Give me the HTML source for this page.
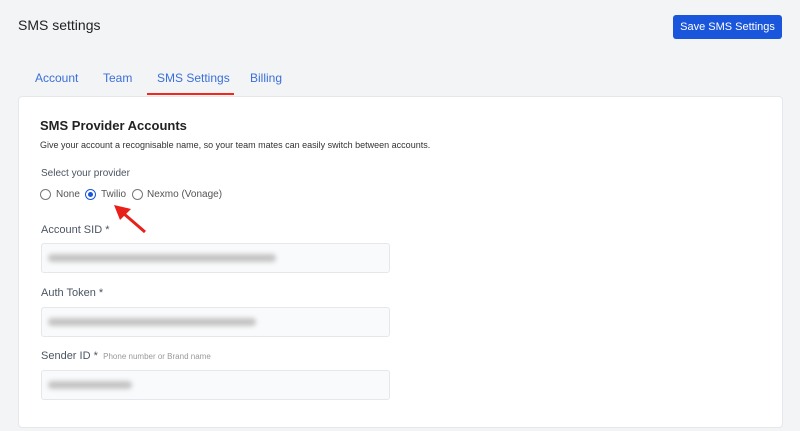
<!DOCTYPE html>
<html><head><style>
body{margin:0;width:800px;height:431px;background:#f3f4f6;font-family:"Liberation Sans",sans-serif;position:relative;overflow:hidden}
.a{position:absolute;white-space:nowrap}
.card{position:absolute;left:18px;top:96px;width:763px;height:330px;background:#fff;border:1px solid #e5e7eb;border-radius:4px}
.inp{position:absolute;left:41px;width:347px;height:28px;background:#f9fafb;border:1px solid #e5e7eb;border-radius:3px}
.blur{position:absolute;top:10px;left:6px;height:8px;background:#c4c4c4;filter:blur(2.5px);border-radius:4px}
.lbl{font-size:11px;color:#4b5563}
.radio{position:absolute;width:9px;height:9px;border:1px solid #777;border-radius:50%}
</style></head><body>
<div class="a" style="left:18px;top:17px;font-size:14px;color:#222">SMS settings</div>
<div class="a" style="left:673px;top:15px;width:109px;height:24px;background:#1a56db;border-radius:3px;color:#fff;font-size:11px;line-height:24px;text-align:center">Save SMS Settings</div>
<div class="a" style="left:35px;top:71px;font-size:12px;color:#3b6fd8">Account</div>
<div class="a" style="left:103px;top:71px;font-size:12px;color:#3b6fd8">Team</div>
<div class="a" style="left:157px;top:71px;font-size:12px;color:#3b6fd8">SMS Settings</div>
<div class="a" style="left:250px;top:71px;font-size:12px;color:#3b6fd8">Billing</div>
<div class="card"></div>
<div class="a" style="left:147px;top:93px;width:87px;height:2px;background:#f0281e"></div>
<div class="a" style="left:40px;top:118px;font-size:13px;font-weight:bold;color:#222">SMS Provider Accounts</div>
<div class="a" style="left:40px;top:140px;font-size:9px;color:#333">Give your account a recognisable name, so your team mates can easily switch between accounts.</div>
<div class="a lbl" style="left:41px;top:168px;font-size:10px">Select your provider</div>
<div class="radio" style="left:40px;top:189px"></div>
<div class="a" style="left:56px;top:189px;font-size:10px;color:#555">None</div>
<div class="radio" style="left:85px;top:189px;border-color:#1a56db"><div style="margin:2px;width:5px;height:5px;border-radius:50%;background:#1a56db"></div></div>
<div class="a" style="left:101px;top:189px;font-size:10px;color:#555">Twilio</div>
<div class="radio" style="left:132px;top:189px"></div>
<div class="a" style="left:147px;top:189px;font-size:10px;color:#555">Nexmo (Vonage)</div>
<svg class="a" style="left:0;top:0" width="800" height="431"><line x1="145" y1="232" x2="123" y2="213" stroke="#e8201a" stroke-width="3"/><polygon points="114,205 131,209 120,220" fill="#e8201a"/></svg>
<div class="a lbl" style="left:41px;top:224px">Account SID *</div>
<div class="inp" style="top:243px"><div class="blur" style="width:228px"></div></div>
<div class="a lbl" style="left:41px;top:287px">Auth Token *</div>
<div class="inp" style="top:307px"><div class="blur" style="width:208px"></div></div>
<div class="a lbl" style="left:41px;top:350px">Sender ID * <span style="font-size:8px;color:#999">&nbsp;Phone number or Brand name</span></div>
<div class="inp" style="top:370px"><div class="blur" style="width:84px"></div></div>
</body></html>
